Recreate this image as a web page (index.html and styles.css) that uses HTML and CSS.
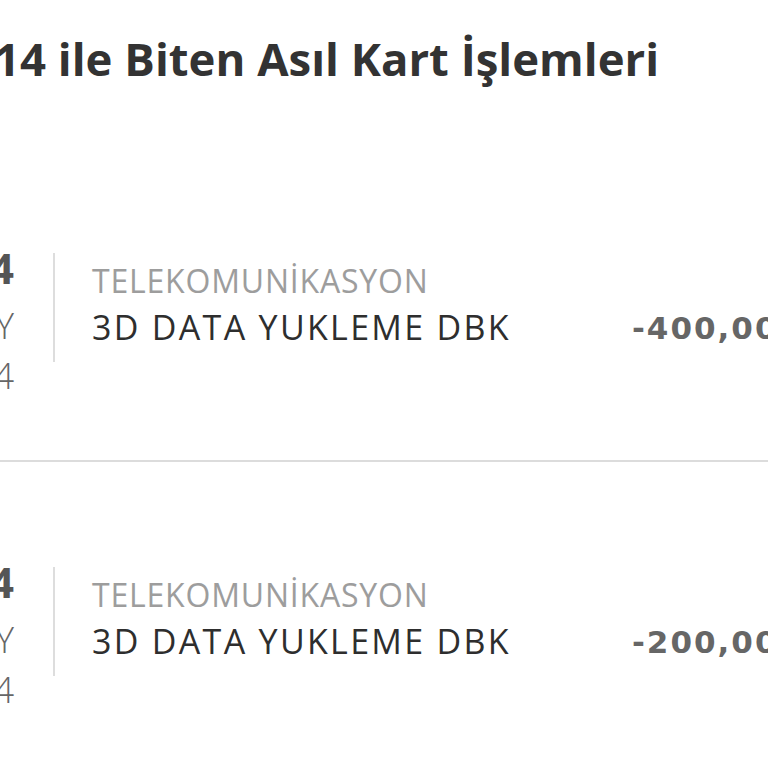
FILE: index.html
```html
<!DOCTYPE html>
<html lang="tr">
<head>
<meta charset="utf-8">
<title>Asıl Kart İşlemleri</title>
<link rel="stylesheet" href="styles.css">
</head>
<body>
<div class="page">
  <h1 class="title">14 ile Biten Asıl Kart İşlemleri</h1>
  <ul class="list">
    <li class="row">
      <div class="date">
        <span class="day">24</span>
        <span class="month">MAY</span>
        <span class="year">2024</span>
      </div>
      <div class="info">
        <div class="cat">TELEKOMUNİKASYON</div>
        <div class="desc">3D DATA YUKLEME DBK</div>
      </div>
      <div class="amount">-400,00 TL</div>
    </li>
    <li class="row">
      <div class="date">
        <span class="day">24</span>
        <span class="month">MAY</span>
        <span class="year">2024</span>
      </div>
      <div class="info">
        <div class="cat">TELEKOMUNİKASYON</div>
        <div class="desc">3D DATA YUKLEME DBK</div>
      </div>
      <div class="amount">-200,00 TL</div>
    </li>
  </ul>
</div>
</body>
</html>
```

FILE: styles.css
```css
html, body {
  margin: 0;
  padding: 0;
  background: #ffffff;
  overflow: hidden;
  width: 768px;
  height: 768px;
}

.page {
  font-family: "Open Sans", "Noto Sans", "Liberation Sans", sans-serif;
  width: 768px;
  overflow: hidden;
}

.title {
  margin: 32px 0 64px -6px;
  font-size: 45.5px;
  line-height: 52px;
  font-weight: 700;
  color: #333333;
  white-space: nowrap;
}

.list {
  list-style: none;
  margin: 0;
  padding: 0;
}

.row {
  display: flex;
  align-items: flex-start;
  padding: 105px 0 59px;
  border-bottom: 2px solid #dcdcdc;
}

.date {
  flex: 0 0 120px;
  margin-left: -106px;
  display: flex;
  flex-direction: column;
  align-items: flex-end;
  text-align: right;
}

.day {
  font-size: 42px;
  line-height: 30px;
  font-weight: 700;
  color: #555555;
}

.month {
  margin-top: 18px;
  font-size: 36px;
  line-height: 50px;
  font-weight: 300;
  color: #666666;
}

.year {
  font-size: 36px;
  line-height: 50px;
  font-weight: 300;
  color: #666666;
}

.info {
  flex: 0 0 540px;
  margin-left: 39px;
  padding: 5px 0 12px 37px;
  border-left: 2px solid #dddddd;
}

.cat {
  font-size: 32px;
  line-height: 46px;
  letter-spacing: 0.8px;
  color: #9d9d9d;
  white-space: nowrap;
}

.desc {
  font-size: 34px;
  line-height: 46px;
  letter-spacing: 2.3px;
  color: #2e2e2e;
  white-space: nowrap;
}

.amount {
  margin-top: 52px;
  font-family: "DejaVu Sans", "Open Sans", sans-serif;
  font-size: 31px;
  line-height: 46px;
  font-weight: 700;
  letter-spacing: 2px;
  color: #666666;
  white-space: nowrap;
}
```
